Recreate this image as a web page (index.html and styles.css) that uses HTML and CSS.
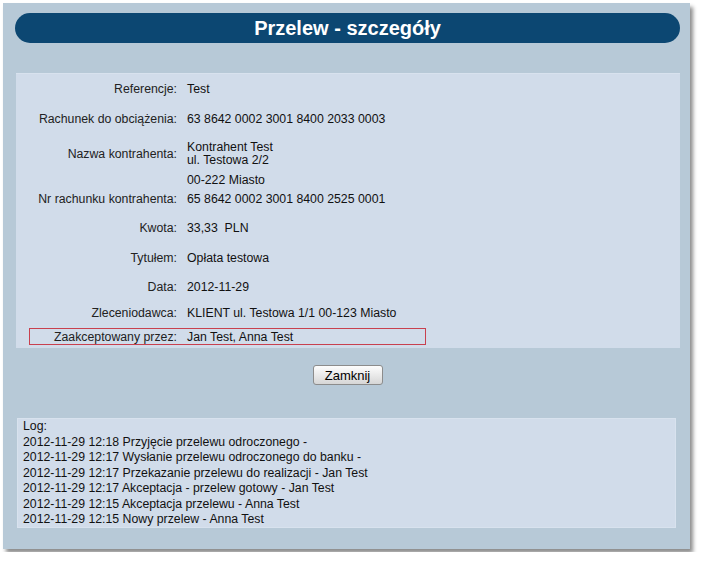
FILE: index.html
```html
<!DOCTYPE html>
<html lang="pl">
<head>
  <meta charset="UTF-8">
  <title>Przelew - szczegóły</title>
  <link rel="stylesheet" href="styles.css">
</head>
<body>
  <div class="window">
    <h1 class="title">Przelew - szczegóły</h1>

    <div class="details">
      <div class="label">Referencje:</div>
      <div class="value">Test</div>

      <div class="label">Rachunek do obciążenia:</div>
      <div class="value">63 8642 0002 3001 8400 2033 0003</div>

      <div class="label">Nazwa kontrahenta:</div>
      <div class="value value-multi">Kontrahent Test<br>ul. Testowa 2/2</div>

      <div class="label"></div>
      <div class="value">00-222 Miasto</div>

      <div class="label">Nr rachunku kontrahenta:</div>
      <div class="value">65 8642 0002 3001 8400 2525 0001</div>

      <div class="label">Kwota:</div>
      <div class="value">33,33&nbsp; PLN</div>

      <div class="label">Tytułem:</div>
      <div class="value">Opłata testowa</div>

      <div class="label">Data:</div>
      <div class="value">2012-11-29</div>

      <div class="label">Zleceniodawca:</div>
      <div class="value">KLIENT ul. Testowa 1/1 00-123 Miasto</div>

      <div class="highlight">
        <div class="label">Zaakceptowany przez:</div>
        <div class="value">Jan Test, Anna Test</div>
      </div>
    </div>

    <div class="actions">
      <button class="btn" type="button">Zamknij</button>
    </div>

    <div class="log">
      <div>Log:</div>
      <div>2012-11-29 12:18 Przyjęcie przelewu odroczonego -</div>
      <div>2012-11-29 12:17 Wysłanie przelewu odroczonego do banku -</div>
      <div>2012-11-29 12:17 Przekazanie przelewu do realizacji - Jan Test</div>
      <div>2012-11-29 12:17 Akceptacja - przelew gotowy - Jan Test</div>
      <div>2012-11-29 12:15 Akceptacja przelewu - Anna Test</div>
      <div>2012-11-29 12:15 Nowy przelew - Anna Test</div>
    </div>
  </div>
</body>
</html>
```

FILE: styles.css
```css
body {
  margin: 0;
  background: #fff;
  font-family: 'Liberation Sans', Arial, sans-serif;
  font-size: 12.3px;
  color: #111;
}

.window {
  box-sizing: border-box;
  width: 687px;
  height: 546px;
  margin: 3px;
  padding: 10px 10px 0 12px;
  background: #b7c9d7;
  box-shadow: 3px 4px 4px rgba(0,0,0,0.45);
}

.title {
  margin: 0;
  height: 30px;
  line-height: 30px;
  border-radius: 15px;
  background: #0c4772;
  color: #fff;
  font-size: 20px;
  font-weight: bold;
  text-align: center;
}

.details {
  display: grid;
  grid-template-columns: 161px 1fr;
  grid-template-rows: 29px 32px 38px 14px 24px 34px 26px 32px 20px auto;
  column-gap: 10px;
  align-items: center;
  margin: 30px 0 0 1px;
  padding-bottom: 3px;
  background: #d1dcea;
  border-top: 1px solid #d8e2ee;
  box-sizing: border-box;
}

.label {
  text-align: right;
  color: #222;
}

.value {
  color: #111;
}

.value-multi {
  line-height: 13px;
}

.highlight {
  grid-column: 1 / -1;
  display: grid;
  grid-template-columns: 147px 1fr;
  column-gap: 10px;
  align-items: center;
  width: 397px;
  height: 17px;
  margin: 5px 0 0 13px;
  border: 1px solid #c8404f;
  box-sizing: border-box;
}

.actions {
  margin-top: 17px;
  text-align: center;
}

.btn {
  width: 70px;
  height: 20px;
  padding: 0;
  font-family: 'Liberation Sans', Arial, sans-serif;
  font-size: 13px;
  color: #000;
  background: linear-gradient(#fdfdfd, #e6e6e6 60%, #d6d6d6);
  border: 1px solid #8c8c8c;
  border-radius: 3px;
}

.log {
  box-sizing: border-box;
  height: 110px;
  margin: 33px 4px 0 2px;
  padding: 0 5px;
  line-height: 15.5px;
  background: #d1dcea;
  border: 1px solid #d8e2ee;
  color: #111;
}
```
